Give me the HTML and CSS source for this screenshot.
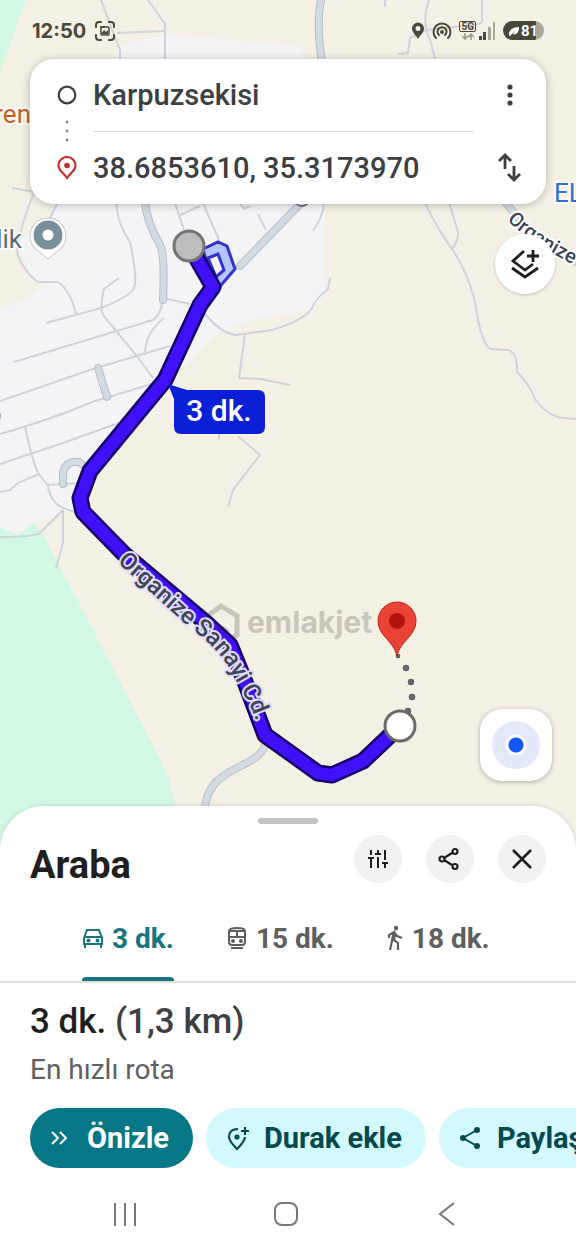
FILE: index.html
```
<!DOCTYPE html>
<html lang="tr">
<head>
    <meta charset="UTF-8">
    <meta name="viewport" content="width=device-width, initial-scale=1.0">
    <title>Araba - Karpuzsekisi</title>
    <link rel="stylesheet" href="styles.css">
</head>
<body>
    <section class="map">
        <svg class="map-canvas" viewBox="0 0 576 846" preserveAspectRatio="xMidYMin slice" role="img" aria-label="Harita">
            <!-- land -->
            <path class="urban" d="M50 215 L60 190 L118 62 V46 L165 34 L300 46 L325 205 V292 L312 310 L290 314 Q235 320 212 338 L165 385 L90 472 L80 505 L40 522 L22 533 L0 530 V308 Q30 302 42 285 Q22 270 20 240 Z"/>
            <path class="green" d="M0 0 H26 L0 72 Z"/>
            <path class="green" d="M0 528 L18 535 L35 522 L46 540 L158 755 Q176 785 179 846 H0 Z"/>

            <!-- small streets -->
            <g class="street">
                <path d="M101 0 L116 40 L120 50 V62"/>
                <path d="M148 0 L165 24 V62"/>
                <path d="M117 33 L165 31"/>
                <path d="M385 0 V7"/>
                <path d="M429 0 Q421 22 430 40 L436 62"/>
                <path d="M482 0 V18 Q484 24 474 25 L426 30 L410 38 L408 53 L398 54"/>
                <path d="M12 188 L34 192 Q14 245 18 256 Q26 274 38 282 L58 282 Q70 290 76 314"/>
                <path d="M57 204 L48 222"/>
                <path d="M116 203 Q118 225 130 242 Q138 280 134 288 Q131 296 101 308 L46 323"/>
                <path d="M119 278 L104 289 Q99 310 104 316 L136 355 L153 378"/>
                <path d="M163 300 Q160 316 153 320 L14 362"/>
                <path d="M163 298 L190 304"/>
                <path d="M164 318 Q146 332 145 352 M170 346 L96 368 L0 401"/>
                <path d="M152 384 L92 402 Q50 420 0 434"/>
                <path d="M130 419 L60 444 L0 464"/>
                <path d="M25 427 Q34 468 39 474 L48 486 Q50 502 63 508 L75 512"/>
                <path d="M39 474 L18 483 L10 490 L0 492"/>
                <path d="M48 485 L78 483"/>
                <path d="M63 510 L40 533 Q34 537 0 537"/>
                <path d="M63 510 V543 L56 568"/>
                <path d="M175 203 L184 230 M203 203 L219 240 M180 215 L200 206"/>
                <path d="M240 203 L244 209 L250 206 M258 214 L266 230"/>
                <path d="M205 314 Q222 334 236 335 L272 330 Q305 320 312 308 Q316 298 328 289 L330 278"/>
                <path d="M245 334 L239 378 L261 379 L290 385"/>
                <path d="M219 432 V440 M238 436 L260 455 L233 490 L228 507"/>
                <path d="M324 203 Q323 217 313 231"/>
                <path d="M425 203 Q438 230 452 249 Q473 280 478 320 Q484 347 491 349 L508 350 Q518 353 517 372 Q530 385 535 399 Q548 417 564 418 L576 419"/>
                <path d="M449 203 Q454 218 458 232 Q459 240 452 249"/>
            </g>

            <!-- main roads -->
            <g class="road-edge">
                <path d="M321 0 Q316 24 322 62"/>
                <path d="M145 203 Q147 222 160 245 Q165 254 163 300"/>
                <path d="M304 200 Q270 235 240 266"/>
                <path d="M502 198 L525 226 L576 262"/>
                <path d="M265 745 C258 770 205 765 205 812"/>
                <path d="M98 368 L107 397"/>
                <path d="M63 484 V473 Q66 460 79 462 L86 467"/>
            </g>
            <g class="road">
                <path d="M321 0 Q316 24 322 62"/>
                <path d="M145 203 Q147 222 160 245 Q165 254 163 300"/>
                <path d="M304 200 Q270 235 240 266"/>
                <path d="M502 198 L525 226 L576 262"/>
                <path d="M265 745 C258 770 205 765 205 812"/>
                <path d="M98 368 L107 397"/>
                <path d="M63 484 V473 Q66 460 79 462 L86 467"/>
            </g>
            <circle cx="302" cy="198" r="8" fill="#fff" stroke="#777" stroke-width="2"/>
            <circle cx="-6" cy="416" r="7" fill="#aaa"/>

            <!-- alternative loop near the start -->
            <path class="loop" fill-rule="evenodd" d="M203 249 L218 242 L227 246 L235 269 L217 290 L208 268 Z M208 258 L218 254 L224 270 L216 277 Z"/>

            <!-- route -->
            <path class="route-edge" d="M189 245 L213 287 L200 305 L165 380 L90 471 L80 498 L83 512 L124 554 L205 622 L230 645 L247 687 L265 735 L318 773 L332 775 L363 761 L399 727"/>
            <path class="route" d="M189 245 L213 287 L200 305 L165 380 L90 471 L80 498 L83 512 L124 554 L205 622 L230 645 L247 687 L265 735 L318 773 L332 775 L363 761 L399 727"/>

            <!-- watermark -->
            <g class="watermark">
                <path d="M206 640 V617 L221 606 L237 616 V635 L231 638 M214 640 V633 Q221 624 228 633" fill="none" stroke-width="5"/>
                <text x="247" y="633">emlakjet</text>
            </g>

            <!-- street names -->
            <path id="sanayi" d="M117 562 L190 628 Q214 645 228 666 L250 705 L268 750" fill="none"/>
            <text class="street-name"><textPath href="#sanayi">Organize Sanayi Cd.</textPath></text>
            <path id="sanayi2" d="M507 220 Q530 246 620 288" fill="none"/>
            <text class="street-name light"><textPath href="#sanayi2">Organize</textPath></text>

            <text class="place orange" x="31" y="123" text-anchor="end">ren</text>
            <text class="place grey" x="22" y="248" text-anchor="end">lik</text>
            <text class="place blue" x="554" y="202">EL</text>

            <!-- place pin -->
            <path d="M48 259 L38 251 A18 18 0 1 1 58 251 Z" fill="#fff" stroke="#c3c3c3" stroke-width="1"/>
            <circle cx="48" cy="235" r="10" fill="none" stroke="#78909c" stroke-width="9"/>

            <!-- walk to the destination -->
            <g fill="#666" stroke="#fff" stroke-width="1">
                <circle cx="398" cy="656" r="3"/>
                <circle cx="406" cy="668" r="4"/>
                <circle cx="411" cy="682" r="4"/>
                <circle cx="412" cy="697" r="4"/>
                <circle cx="408" cy="711" r="4"/>
            </g>
            <circle cx="189" cy="246" r="15" fill="#bdbdbd" stroke="#757575" stroke-width="3"/>
            <circle cx="400" cy="726" r="15" fill="#fff" stroke="#6b6b66" stroke-width="3"/>
            <path d="M397 656 C394 641 378 636 378 621 A19 19 0 0 1 416 621 C416 636 400 641 397 656 Z" fill="#ea4335" stroke="#b8231b"/>
            <circle cx="397" cy="621" r="8" fill="#b31412"/>

            <!-- duration bubble -->
            <path d="M168 384 L187 390 H258 Q265 390 265 397 V427 Q265 434 258 434 H181 Q174 434 174 427 V399 Z" fill="#0b1fd6"/>
            <text class="bubble-text" x="219" y="421" text-anchor="middle">3 dk.</text>
        </svg>

        <header class="status-bar">
            <span class="clock">12:50</span>
            <svg width="20" height="20" viewBox="0 0 20 20" fill="none" stroke="#4a4838" stroke-width="2" stroke-linecap="round">
                <path d="M1 6 V4 Q1 1 4 1 H6 M14 1 H16 Q19 1 19 4 V6 M19 14 V16 Q19 19 16 19 H14 M6 19 H4 Q1 19 1 16 V14"/>
                <rect x="6" y="6" width="8" height="8" rx="1" stroke-width="1.500"/>
                <path d="M6 13 L9 9 L11 11 L13 9 V13 Z" fill="#4a4838" stroke="none"/>
                <path d="M6 6 H9"/>
            </svg>
            <div class="status-icons">
                <svg width="14" height="18" viewBox="0 0 14 18"><path fill="#4a4838" fill-rule="evenodd" d="M7 17 C4 12 1 10 1 6.500 A6 6 0 0 1 13 6.500 C13 10 10 12 7 17 Z M7 4 A2.500 2.500 0 1 0 7 9 A2.500 2.500 0 1 0 7 4 Z"/></svg>
                <svg width="20" height="18" viewBox="0 0 20 18" fill="none" stroke="#4a4838" stroke-width="2" stroke-linecap="round">
                    <path d="M4 16 A8.500 8.500 0 1 1 16 16 M7 13 A4.500 4.500 0 1 1 13 13"/>
                    <circle cx="10" cy="10" r="1"/>
                </svg>
                <div class="network">
                    <span>5G</span>
                    <svg width="12" height="7" viewBox="0 0 12 7" fill="none" stroke="#9b988a" stroke-width="1.500"><path d="M3 0 V6 M0 3 L3 6 L6 3 M9 7 V1 M6 4 L9 1 L12 4"/></svg>
                </div>
                <svg width="18" height="18" viewBox="0 0 18 18">
                    <path fill="#4a4838" d="M1 14 h3 v4 h-3 Z M5 10 h3 v8 h-3 Z"/>
                    <path fill="#a9a698" d="M10 5 h3 v13 h-3 Z M15 0 h2 v18 h-2 Z"/>
                </svg>
                <span class="battery">
                    <svg width="10" height="10" viewBox="0 0 10 10"><path fill="#fff" d="M0 9 Q0 1 10 1 Q10 9 4 8.500 L6 5 L1 10 Z"/></svg>
                    81
                </span>
            </div>
        </header>

        <div class="search-card">
            <div class="rail">
                <svg width="20" height="20" viewBox="0 0 20 20"><circle cx="10" cy="10" r="8.300" fill="none" stroke="#3c4043" stroke-width="2.200"/></svg>
                <svg width="4" height="22" viewBox="0 0 4 22" fill="#80868b"><circle cx="2" cy="2" r="1.400"/><circle cx="2" cy="11" r="1.400"/><circle cx="2" cy="20" r="1.400"/></svg>
                <svg width="20" height="24" viewBox="0 0 20 24"><path d="M10 22 C7 17 1.500 15 1.500 9.500 A8.500 8.500 0 0 1 18.500 9.500 C18.500 15 13 17 10 22 Z" fill="none" stroke="#c5302c" stroke-width="2.200"/><circle cx="10" cy="9.500" r="2.800" fill="#c5302c"/></svg>
            </div>
            <div class="fields">
                <input type="text" aria-label="Başlangıç noktası" value="Karpuzsekisi">
                <input type="text" aria-label="Varış noktası" value="38.6853610, 35.3173970">
            </div>
            <div class="card-buttons">
                <button type="button" aria-label="Diğer seçenekler">
                    <svg width="24" height="24" viewBox="0 0 24 24" fill="#3c4043"><circle cx="12" cy="4" r="2.600"/><circle cx="12" cy="12" r="2.600"/><circle cx="12" cy="20" r="2.600"/></svg>
                </button>
                <button type="button" aria-label="Yer değiştir">
                    <svg width="26" height="30" viewBox="0 0 26 30" fill="none" stroke="#3c4043" stroke-width="2.800"><path d="M8 17 V3 M2 9 L8 3 L14 9 M17 14 V28 M11 22 L17 28 L23 22"/></svg>
                </button>
            </div>
        </div>

        <button type="button" class="layers" aria-label="Katmanlar">
            <svg width="32" height="32" viewBox="0 0 32 32" fill="none" stroke="#1f1f1f" stroke-width="2.800">
                <path d="M15 3 L4 13 L16 22 L24 16 M3 20 L16 29 L29 20 M18 8 H30 M24 2 V14"/>
            </svg>
        </button>
        <button type="button" class="locate" aria-label="Konumum"><span></span></button>
    </section>

    <main class="sheet">
        <div class="handle"></div>
        <div class="sheet-head">
            <h1>Araba</h1>
            <button type="button" class="round" aria-label="Seçenekler">
                <svg width="24" height="24" viewBox="0 0 24 24" fill="none" stroke="#1f1f1f" stroke-width="2">
                    <path d="M5 3 V8 M2 11 H8 M5 11 V21 M12 3 V7 M9 7 H15 M12 10 V21 M19 3 V13 M16 16 H22 M19 16 V21"/>
                </svg>
            </button>
            <button type="button" class="round" aria-label="Paylaş">
                <svg width="24" height="24" viewBox="0 0 24 24" fill="none" stroke="#1f1f1f" stroke-width="2.200">
                    <path d="M6 11 L14 6 M6 13 L14 18"/>
                    <circle cx="4" cy="12" r="2.500"/><circle cx="17" cy="4.500" r="2.500"/><circle cx="17" cy="19.500" r="2.500"/>
                </svg>
            </button>
            <button type="button" class="round" aria-label="Kapat">
                <svg width="24" height="24" viewBox="0 0 24 24" stroke="#1f1f1f" stroke-width="2.600"><path d="M3 3 L21 21 M21 3 L3 21"/></svg>
            </button>
        </div>

        <nav class="tabs">
            <a href="#araba" class="active">
                <svg width="22" height="22" viewBox="0 0 22 22" fill="none" stroke="currentColor" stroke-width="2">
                    <path d="M2 11 L5 3 H17 L20 11 V17 H2 Z M2 10 H20 M3 17 V21 M19 17 V21"/>
                    <circle cx="6.500" cy="13.500" r="1"/><circle cx="15.500" cy="13.500" r="1"/>
                </svg>
                3 dk.
            </a>
            <a href="#toplu-tasima">
                <svg width="22" height="22" viewBox="0 0 22 22" fill="none" stroke="currentColor" stroke-width="2">
                    <path d="M3 4 Q3 1 11 1 Q19 1 19 4 V15 Q19 18 16 18 H6 Q3 18 3 15 Z M3 4 H19 M3 10 H19 M11 4 V10 M5 21 H17"/>
                    <circle cx="7" cy="14" r="1"/><circle cx="15" cy="14" r="1"/>
                </svg>
                15 dk.
            </a>
            <a href="#yuruyus">
                <svg width="18" height="26" viewBox="0 0 18 26" fill="none" stroke="currentColor" stroke-width="2.200">
                    <circle cx="10" cy="3" r="2.200" fill="currentColor" stroke="none"/>
                    <path d="M3 13 V10 L8 7 L6 16 L4 25 M8 7 L11 11 L16 13 M9 8 L8 15 L12 18 V25"/>
                    <path d="M8 8 L7 16" stroke-width="3.500"/>
                </svg>
                18 dk.
            </a>
        </nav>

        <section class="summary">
            <h2>3 dk. <span>(1,3 km)</span></h2>
            <p>En hızlı rota</p>
        </section>

        <div class="actions">
            <button type="button" class="primary">
                <svg width="20" height="20" viewBox="0 0 20 20" fill="none" stroke="currentColor" stroke-width="2"><path d="M2 4 L8 10 L2 16 M10 4 L16 10 L10 16"/></svg>
                Önizle
            </button>
            <button type="button">
                <svg width="24" height="26" viewBox="0 0 24 26" fill="none" stroke="currentColor" stroke-width="2.200">
                    <path d="M12 4 Q3 4 3 12 Q3 16 11 24 Q19 16 19 12 M19 2 V10 M15 6 H23"/>
                    <circle cx="11" cy="12" r="1.500"/>
                </svg>
                Durak ekle
            </button>
            <button type="button">
                <svg width="24" height="24" viewBox="0 0 24 24" fill="currentColor" stroke="currentColor" stroke-width="2">
                    <path d="M18 4 L4 12 L18 20" fill="none"/>
                    <circle cx="4" cy="12" r="2"/><circle cx="18" cy="4" r="2"/><circle cx="18" cy="20" r="2"/>
                </svg>
                Paylaş
            </button>
        </div>

        <footer class="nav-bar">
            <button type="button" aria-label="Son uygulamalar"><svg width="26" height="26" viewBox="0 0 26 26" stroke="#777" stroke-width="2"><path d="M3 2 V25 M13 2 V25 M23 2 V25"/></svg></button>
            <button type="button" aria-label="Ana ekran"><svg width="26" height="26" viewBox="0 0 26 26" fill="none" stroke="#777" stroke-width="2"><rect x="2" y="2" width="22" height="22" rx="7"/></svg></button>
            <button type="button" aria-label="Geri"><svg width="26" height="26" viewBox="0 0 26 26" fill="none" stroke="#777" stroke-width="2"><path d="M20 2 L6 13 L20 24"/></svg></button>
        </footer>
    </main>
</body>
</html>
```
FILE: styles.css
```
* {
    box-sizing: border-box;
}

body {
    margin: 0;
    min-height: 100vh;
    display: flex;
    flex-direction: column;
    font-family: Roboto, "Liberation Sans", sans-serif;
    color: #1f1f1f;
    background: #fff;
    overflow-x: hidden;
}

button {
    border: none;
    padding: 0;
    background: none;
    font: inherit;
    color: inherit;
    cursor: pointer;
    display: flex;
    align-items: center;
    justify-content: center;
}

svg {
    flex-shrink: 0;
}

/* map */
.map {
    position: relative;
    flex: 1;
    min-height: 600px;
    background: #f4f0e3;
    overflow: hidden;
}

.map-canvas {
    position: absolute;
    inset: 0;
    width: 100%;
    height: 100%;
}

.urban { fill: #f4f3f6; }
.green { fill: #d2f8e3; }

.street {
    fill: none;
    stroke: #cdd2dc;
    stroke-width: 2;
}

.road-edge, .road {
    fill: none;
    stroke-linecap: round;
}
.road-edge { stroke: #b3bfcb; stroke-width: 8; }
.road { stroke: #d2dbe2; stroke-width: 6; }

.loop {
    fill: #b3c6fd;
    stroke: #3431cf;
    stroke-width: 3;
}

.route-edge, .route {
    fill: none;
    stroke-linejoin: round;
}
.route-edge { stroke: #15006b; stroke-width: 17; }
.route { stroke: #4010fb; stroke-width: 12; }

.watermark {
    opacity: 0.22;
    stroke: #333;
}
.watermark text {
    font: 700 30px Inter, sans-serif;
    fill: #333;
    stroke: none;
}

.street-name {
    font-size: 24px;
    font-weight: 500;
    fill: #3c4656;
    stroke: #e2dcfa;
    stroke-width: 4px;
    stroke-linejoin: round;
    paint-order: stroke;
}
.street-name.light {
    font-size: 20px;
    stroke: #fff;
}

.place {
    font-size: 26px;
    stroke: #fff;
    stroke-width: 3px;
    paint-order: stroke;
}
.orange { fill: #c8601c; }
.grey { fill: #546e7a; }
.blue { fill: #2b6fd6; }

.bubble-text {
    font-size: 30px;
    font-weight: 500;
    fill: #fff;
}

/* status bar */
.status-bar {
    position: relative;
    display: flex;
    align-items: center;
    gap: 9px;
    height: 59px;
    padding: 2px 32px 0;
    color: #4a4838;
}

.clock {
    font: 700 20px Inter, sans-serif;
}

.status-icons {
    display: flex;
    align-items: center;
    gap: 7px;
    margin-left: auto;
}

.network {
    display: flex;
    flex-direction: column;
    align-items: center;
    gap: 1px;
    margin-right: -5px;
}
.network span {
    border: 1px solid #4a4838;
    border-radius: 2px;
    padding: 0 1px;
    font-size: 10px;
    line-height: 9px;
    font-weight: 700;
}

.battery {
    display: flex;
    align-items: center;
    gap: 2px;
    height: 19px;
    width: 41px;
    padding-left: 6px;
    border-radius: 10px;
    background: linear-gradient(to right, #4a4838 81%, #a9a698 81%);
    color: #fff;
    font-size: 15px;
    font-weight: 700;
}

/* search card */
.search-card {
    position: relative;
    display: flex;
    margin: 0 30px;
    padding: 0 12px 0 20px;
    border-radius: 24px;
    background: #fff;
    box-shadow: 0 1px 8px rgba(0, 0, 0, 0.25);
}

.rail {
    display: flex;
    flex-direction: column;
    align-items: center;
    justify-content: space-between;
    width: 34px;
    margin-right: 9px;
    padding: 26px 0 24px;
}

.fields {
    flex: 1;
    min-width: 0;
}
.fields input {
    display: block;
    width: 100%;
    height: 72px;
    border: none;
    padding: 0;
    background: none;
    font: 500 29px Roboto, sans-serif;
    color: #3c4043;
    outline: none;
}
.fields input:first-child {
    height: 73px;
    border-bottom: 1px solid #dadce0;
}

.card-buttons {
    margin-left: 12px;
}
.card-buttons button {
    width: 48px;
    height: 72px;
}

.layers {
    position: absolute;
    top: 234px;
    right: 21px;
    width: 60px;
    height: 60px;
    border-radius: 50%;
    background: #fff;
    box-shadow: 0 1px 3px rgba(0, 0, 0, 0.2);
}

.locate {
    position: absolute;
    right: 24px;
    bottom: 65px;
    width: 72px;
    height: 72px;
    border-radius: 22px;
    background: #fff;
    box-shadow: 0 1px 5px rgba(0, 0, 0, 0.3);
}
.locate span {
    width: 48px;
    height: 48px;
    border-radius: 50%;
    background: radial-gradient(circle, #1557f5 7px, #fff 8px, #fff 10px, #e3e8fb 11px);
}

/* bottom sheet */
.sheet {
    position: relative;
    margin-top: -40px;
    padding-top: 12px;
    border-radius: 44px 44px 0 0;
    background: #fff;
    box-shadow: 0 0 4px rgba(0, 0, 0, 0.15);
}

.handle {
    width: 60px;
    height: 6px;
    margin: 0 auto;
    border-radius: 3px;
    background: #c4c4c4;
}

.sheet-head {
    display: flex;
    align-items: flex-start;
    gap: 24px;
    padding: 11px 30px 0;
}
.sheet-head h1 {
    flex: 1;
    margin: 0;
    padding-top: 8px;
    font-size: 38px;
    line-height: 44px;
    font-weight: 700;
}

.round {
    width: 48px;
    height: 48px;
    border-radius: 50%;
    background: #f2f2f2;
}

.tabs {
    display: flex;
    gap: 52px;
    height: 96px;
    padding-left: 82px;
    border-bottom: 2px solid #dedede;
}
.tabs a {
    position: relative;
    display: flex;
    align-items: center;
    gap: 8px;
    padding-top: 8px;
    font-size: 28px;
    font-weight: 700;
    color: #5f5f5f;
    text-decoration: none;
    white-space: nowrap;
}
.tabs .active {
    color: #16757f;
}
.tabs .active::after {
    content: "";
    position: absolute;
    left: 0;
    right: 0;
    bottom: 0;
    height: 4px;
    border-radius: 4px 4px 0 0;
    background: #16757f;
}

.summary {
    padding: 17px 30px 0;
}
.summary h2 {
    margin: 0;
    font-size: 35px;
    line-height: 44px;
    font-weight: 500;
}
.summary h2 span {
    color: #3c4043;
}
.summary p {
    margin: 8px 0 0;
    font-size: 28px;
    line-height: 36px;
    color: #606060;
}

.actions {
    display: flex;
    gap: 13px;
    padding: 20px 0 0 30px;
    overflow: hidden;
}
.actions button {
    flex-shrink: 0;
    gap: 14px;
    height: 60px;
    padding: 0 24px 0 20px;
    border-radius: 30px;
    background: #d3f8fe;
    color: #04494d;
    font-size: 29px;
    font-weight: 700;
}
.actions .primary {
    gap: 17px;
    background: #067786;
    color: #fff;
}

.nav-bar {
    display: flex;
    height: 81px;
    padding: 0 48px 0 44px;
}
.nav-bar button {
    flex: 1;
    padding-top: 10px;
}
```
